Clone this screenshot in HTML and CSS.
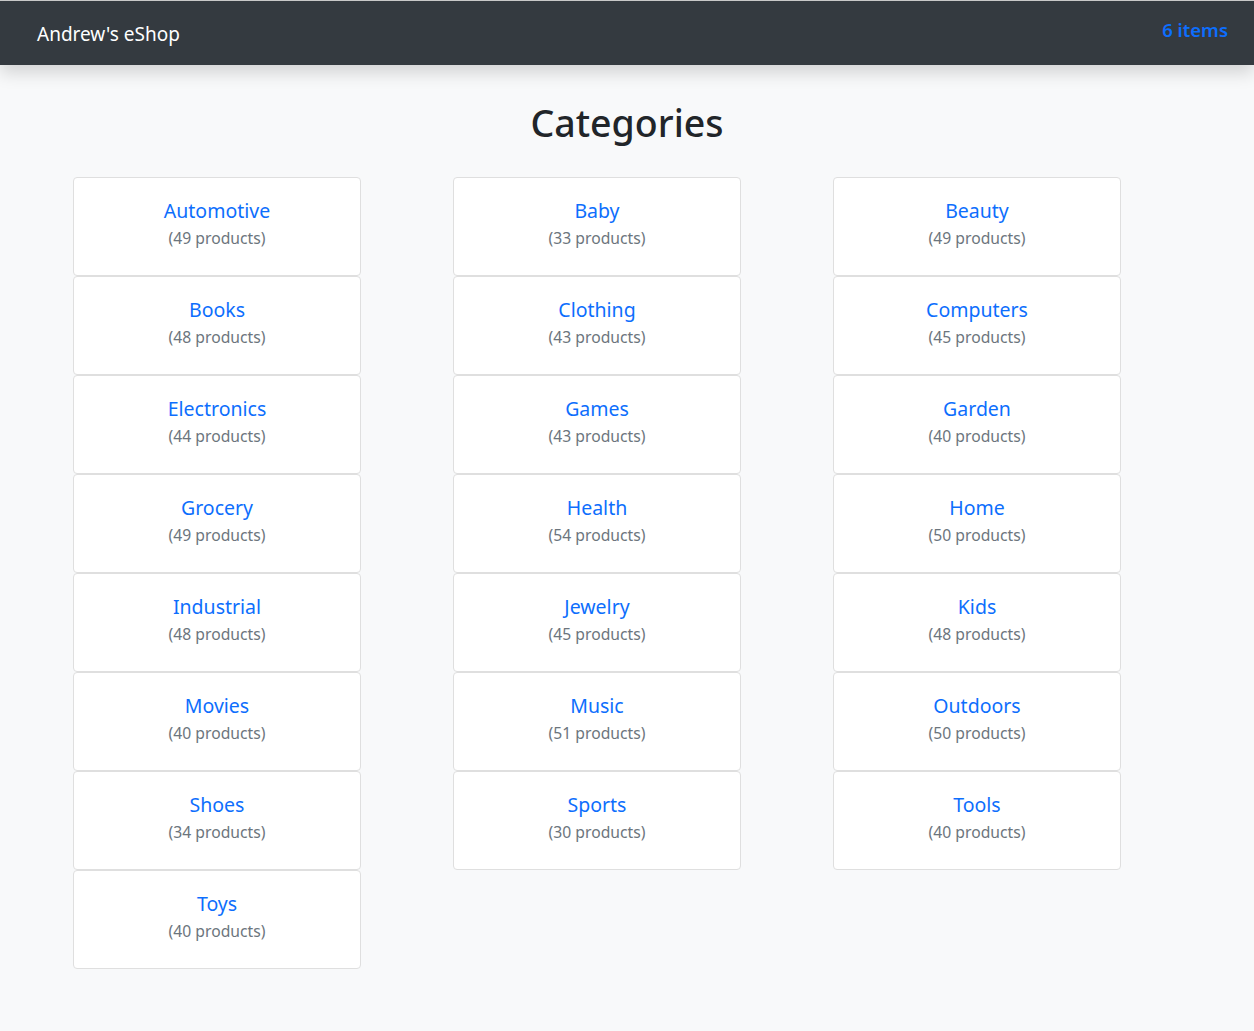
FILE: index.html
```html
<!DOCTYPE html>
<html lang="en">
<head>
<meta charset="utf-8">
<title>Andrew's eShop</title>
<link rel="stylesheet" href="styles.css">
</head>
<body>
<nav class="navbar">
  <a class="brand" href="#">Andrew's eShop</a>
  <a class="cart" href="#">6 items</a>
</nav>
<main class="main">
  <h1 class="title">Categories</h1>
  <div class="grid">
    <div class="col">
      <div class="card"><a class="name" href="#">Automotive</a><div class="count">(49 products)</div></div>
      <div class="card"><a class="name" href="#">Books</a><div class="count">(48 products)</div></div>
      <div class="card"><a class="name" href="#">Electronics</a><div class="count">(44 products)</div></div>
      <div class="card"><a class="name" href="#">Grocery</a><div class="count">(49 products)</div></div>
      <div class="card"><a class="name" href="#">Industrial</a><div class="count">(48 products)</div></div>
      <div class="card"><a class="name" href="#">Movies</a><div class="count">(40 products)</div></div>
      <div class="card"><a class="name" href="#">Shoes</a><div class="count">(34 products)</div></div>
      <div class="card"><a class="name" href="#">Toys</a><div class="count">(40 products)</div></div>
    </div>
    <div class="col">
      <div class="card"><a class="name" href="#">Baby</a><div class="count">(33 products)</div></div>
      <div class="card"><a class="name" href="#">Clothing</a><div class="count">(43 products)</div></div>
      <div class="card"><a class="name" href="#">Games</a><div class="count">(43 products)</div></div>
      <div class="card"><a class="name" href="#">Health</a><div class="count">(54 products)</div></div>
      <div class="card"><a class="name" href="#">Jewelry</a><div class="count">(45 products)</div></div>
      <div class="card"><a class="name" href="#">Music</a><div class="count">(51 products)</div></div>
      <div class="card"><a class="name" href="#">Sports</a><div class="count">(30 products)</div></div>
    </div>
    <div class="col">
      <div class="card"><a class="name" href="#">Beauty</a><div class="count">(49 products)</div></div>
      <div class="card"><a class="name" href="#">Computers</a><div class="count">(45 products)</div></div>
      <div class="card"><a class="name" href="#">Garden</a><div class="count">(40 products)</div></div>
      <div class="card"><a class="name" href="#">Home</a><div class="count">(50 products)</div></div>
      <div class="card"><a class="name" href="#">Kids</a><div class="count">(48 products)</div></div>
      <div class="card"><a class="name" href="#">Outdoors</a><div class="count">(50 products)</div></div>
      <div class="card"><a class="name" href="#">Tools</a><div class="count">(40 products)</div></div>
    </div>
  </div>
</main>
</body>
</html>
```

FILE: styles.css
```css
* { box-sizing: border-box; }
html, body { margin: 0; padding: 0; }
body {
  background: #f8f9fa;
  font-family: "Noto Sans", "Open Sans", sans-serif;
  color: #212529;
  border-top: 1px solid #c8c8c8;
  min-height: 1031px;
}
a { text-decoration: none; }
.navbar {
  height: 64px;
  background: #343a40;
  display: flex;
  justify-content: space-between;
  align-items: flex-start;
  padding: 0 26px 0 37px;
  box-shadow: 0 8px 16px rgba(0,0,0,0.15);
  position: relative;
}
.brand {
  color: #fff;
  font-size: 19px;
  line-height: 24px;
  margin-top: 21px;
}
.cart {
  color: #0d6efd;
  font-size: 18.5px;
  font-weight: 600;
  line-height: 24px;
  margin-top: 17px;
}
.main { padding-top: 34px; }
.title {
  margin: 0 0 30px 0;
  text-align: center;
  font-size: 37.5px;
  font-weight: 500;
  line-height: 48px;
}
.grid {
  display: grid;
  grid-template-columns: repeat(3, 288px);
  column-gap: 92px;
  margin-left: 73px;
}
.col { display: flex; flex-direction: column; }
.card {
  background: #fff;
  border: 1px solid #dfdfdf;
  border-radius: 4px;
  height: 99px;
  padding: 21px 8px 0;
  display: flex;
  flex-direction: column;
  align-items: center;
}
.name {
  color: #0d6efd;
  font-size: 19.5px;
  line-height: 24px;
  margin-bottom: 3px;
}
.count {
  color: #6c757d;
  font-size: 15.7px;
  line-height: 24px;
}
```
